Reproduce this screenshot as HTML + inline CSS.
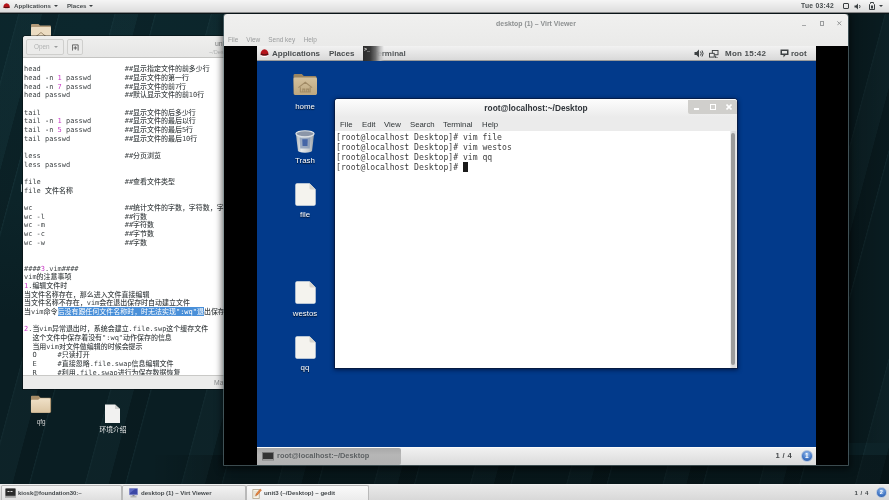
<!DOCTYPE html>
<html><head><meta charset="utf-8">
<style>
*{box-sizing:border-box;margin:0;padding:0}
html,body{width:889px;height:500px;overflow:hidden;background:#0c2126}
body{position:relative;will-change:transform;font-family:"Liberation Sans","Noto Sans CJK SC",sans-serif;font-size:6px;color:#2e3436}
.abs{position:absolute}
#bg{left:0;top:0;width:889px;height:500px;background:
 repeating-linear-gradient(105deg,rgba(255,255,255,0) 0,rgba(255,255,255,0) 21px,rgba(120,190,200,.075) 21.5px,rgba(120,190,200,.03) 23px,rgba(120,190,200,.03) 44px,rgba(0,0,0,.10) 44.5px,rgba(0,0,0,.10) 60px,rgba(120,190,200,.065) 60.5px,rgba(255,255,255,0) 62px,rgba(255,255,255,0) 93px),
 radial-gradient(ellipse 500px 300px at 10% 5%,#0c272d 0,#0c2429 60%,#0a1e23 100%)}
/* host top bar */
#topbar{left:0;top:0;width:889px;height:14px;background:linear-gradient(#f5f5f5 0,#dedede 11.5px,#9a9a9a 12.4px,#0a1114 13.2px,#0a1a1e 14px)}
#topbar .t{position:absolute;top:0;line-height:12.4px;font-weight:bold;font-size:6.15px;color:#464b4d;white-space:nowrap}
/* host bottom bar */
#botbar{left:0;top:484px;width:889px;height:16px;background:linear-gradient(#f4f4f4 0,#e9e9e9 1.500px,#d8d8d8 100%)}
.tb{position:absolute;top:.8px;height:15.200px;border:.8px solid #b9b9b9;border-bottom:none;border-radius:2px 2px 0 0;font-weight:bold;font-size:6.100px;line-height:16.200px;color:#42474a;white-space:nowrap;background:linear-gradient(#f3f3f3,#dfdfdf)}
.tb span{position:absolute;left:18px;top:-.8px}
/* gedit */
#gedit{left:23px;top:36px;width:230px;height:353px;background:#fff;border-radius:3px 3px 0 0;overflow:hidden;box-shadow:0 0 0 1px rgba(0,0,0,.35)}
#ghead{left:0;top:0;width:230px;height:22px;background:linear-gradient(#efefee,#e6e6e5);border-bottom:1px solid #c4c4c2}
#gtext{left:1px;top:29.2px;width:230px;font-family:"DejaVu Sans Mono","Liberation Mono","Noto Sans CJK SC",monospace;font-size:6.98px;line-height:8.677px;color:#3f4446;font-weight:500;white-space:pre;tab-size:8}
#gtext i{font-style:normal;color:#c839c5}
#gtext .cj{font-family:"Noto Sans CJK SC","Liberation Mono",monospace}
#gtext b{font-weight:normal;background:#4a90d9;color:#fff;padding:1.3px 0 .4px}
#gstat{left:0;top:339px;width:230px;height:14px;background:#ececeb;border-top:1px solid #c9c9c7;font-size:6.8px;color:#8a8d8e;line-height:13px}
/* virt viewer */
#vv{left:224px;top:14px;width:624px;height:451px;background:#000;border-radius:3px 3px 0 0;overflow:hidden;box-shadow:0 0 0 .8px rgba(120,145,150,.65),0 2px 7px 2px rgba(0,0,0,.6)}
#vvhead{left:0;top:0;width:624px;height:32px;background:linear-gradient(#f0f0ef,#eaeae9);}
#vvtitle{left:0;top:0;width:624px;text-align:center;line-height:19px;font-size:6.9px;font-weight:bold;color:#8d9091}
.vvm{top:19px;line-height:13px;font-size:6.45px;color:#9a9c9d}
/* guest */
#guest{left:33px;top:32px;width:559px;height:419px;background:#023a8b;overflow:hidden}
#gtop{left:0;top:0;width:559px;height:14.600px;background:linear-gradient(#f2f2f2,#d9d9d9);border-bottom:.8px solid #9a9a9a}
#gtop .t{position:absolute;top:0;line-height:15.600px;font-weight:bold;font-size:8px;color:#4a4e50;white-space:nowrap}
#gbot{left:0;top:400.600px;width:559px;height:18.400px;background:linear-gradient(#f1f1f1,#dadada);border-top:1px solid #fbfbfb}
.dl{position:absolute;width:60px;text-align:center;color:#fff;font-size:7.900px;line-height:9px;text-shadow:0 1px 1px rgba(0,0,0,.8)}
/* terminal */
#term{left:78px;top:53.200px;width:402px;height:268.700px;background:#fff;border-radius:3px 3px 0 0;overflow:hidden;box-shadow:0 0 0 .8px rgba(10,20,50,.75),0 1px 4px 1px rgba(0,5,30,.6)}
#thead{left:0;top:0;width:402px;height:18px;background:linear-gradient(#fdfdfd,#ebebeb)}
#ttitle{left:0;top:0;width:402px;text-align:center;line-height:18.600px;font-weight:bold;font-size:8.3px;color:#30353a}
#tmenu{left:0;top:18px;width:402px;height:14px;background:#ebebeb}
#tmenu span{position:absolute;top:0;line-height:16px;font-size:7.8px;color:#2e3436}
#ttext{left:1px;top:34px;font-family:"DejaVu Sans Mono","Liberation Mono",monospace;font-size:8.12px;line-height:9.92px;color:#404040;white-space:pre}
</style></head><body>
<div id="bg" class="abs"></div>
<div class="abs" style="left:0;top:455px;width:889px;height:30px;background:linear-gradient(90deg,rgba(0,0,0,0) 0,rgba(0,0,0,0) 150px,rgba(0,0,0,.28) 240px,rgba(0,0,0,.28) 100%)"></div>
<div class="abs" style="left:840px;top:13px;width:49px;height:430px;background:linear-gradient(90deg,rgba(0,0,0,.3),rgba(0,0,0,.05))"></div>

<!-- desktop icons -->
<svg class="abs" style="left:30px;top:23px" width="22" height="20" viewBox="0 0 22 20"><path d="M1 2q0-1 1-1h6.500l1.500 1.500h10q1 0 1 1V19H1z" fill="#b39a78"/><path d="M1 5q0-1 1-1h18q1 0 1 1V19H1z" fill="#ecdcc2"/><path d="M6 13.500l5-4 5 4" fill="none" stroke="#a08c6e" stroke-width="1"/></svg>
<svg class="abs" style="left:29.800px;top:394px" width="23" height="20" viewBox="0 0 24 20"><defs><linearGradient id="qg" x1="0" y1="0" x2="0" y2="1"><stop offset="0" stop-color="#f0e1c8"/><stop offset="1" stop-color="#dbc5a2"/></linearGradient></defs><path d="M1 2.500q0-1 1-1h7l2 2h10q1 0 1 1V18q0 1-1 1H2q-1 0-1-1z" fill="#a78d68"/><path d="M1 6.500q0-1 1-1h6.500l2-1.500h9.500q1 0 1 1V18q0 1-1 1H2q-1 0-1-1z" fill="url(#qg)"/></svg>
<div class="abs" style="left:21.200px;top:416.800px;width:40px;text-align:center;color:#d4d4d4;font-size:6.3px;line-height:9px">qfg</div>
<svg class="abs" style="left:104px;top:403.500px" width="17" height="19.500" viewBox="0 0 17 21" preserveAspectRatio="none"><path d="M1 0.5h10l5 5v15H1z" fill="#f1f1f0"/><path d="M11 0.5l5 5h-5z" fill="#cfcfcd"/></svg>
<div class="abs" style="left:93px;top:424.800px;width:40px;text-align:center;color:#f0f0f0;font-size:6.8px;line-height:10px;font-family:'Liberation Sans','Noto Sans CJK SC',sans-serif">环境介绍</div>

<!-- gedit -->
<div id="gedit" class="abs">
 <div id="ghead" class="abs">
  <div class="abs" style="left:3px;top:3.4px;width:38px;height:15.600px;border:1px solid #cfcfcd;border-radius:2px;background:#ebebea"></div>
  <div class="abs" style="left:11px;top:3px;line-height:16px;font-size:6.4px;color:#b0b2b2">Open</div>
  <div class="abs" style="left:31px;top:10px;width:0;height:0;border:2px solid transparent;border-top:2.5px solid #9a9c9c"></div>
  <div class="abs" style="left:44px;top:3.4px;width:16px;height:15.600px;border:1px solid #cfcfcd;border-radius:2px;background:#ebebea"></div>
  <svg class="abs" style="left:48.500px;top:7.500px" width="7" height="7" viewBox="0 0 8 8"><path d="M0.5 7.5V1h6.5v6.5" fill="none" stroke="#555" stroke-width="1"/><path d="M3.8 2.5v4M1.8 4.5h4" stroke="#555" stroke-width="1"/></svg>
  <div class="abs" style="left:192px;top:3.700px;font-size:6.900px;color:#7a7d7e;line-height:8px">unit3</div>
  <div class="abs" style="left:186px;top:12.500px;font-size:5.6px;color:#b5b7b7;line-height:7px">~/Desktop</div>
 </div>
<div id="gtext" class="abs">head			##显示指定文件的前多少行
head -n <i>1</i> passwd	##显示文件的第一行
head -n <i>7</i> passwd	##显示文件的前7行
head passwd		##默认显示文件的前10行

tail			##显示文件的后多少行
tail -n <i>1</i> passwd	##显示文件的最后以行
tail -n <i>5</i> passwd	##显示文件的最后5行
tail passwd		##显示文件的最后10行

less			##分页浏览
less passwd

file			##查看文件类型
file 文件名称

wc			##统计文件的字数，字符数，字节数
wc -l			##行数
wc -m			##字符数
wc -c			##字节数
wc -w			##字数


####<i>3</i>.vim####
vim的注意事项
<i>1</i>.编辑文件时
当文件名称存在，那么进入文件直接编辑
当文件名称不存在，vim会在退出保存时自动建立文件
当vim命令<b>后没有跟任何文件名称时，时无法实现":wq"退</b>出保存的

<i>2</i>.当vim异常退出时，系统会建立.file.swp这个缓存文件
  这个文件中保存着没有":wq"动作保存的信息
  当用vim对文件做编辑的时候会提示
  O	#只读打开
  E	#直接忽略.file.swap信息编辑文件
  R	#利用.file.swap进行为保存数据恢复</div>
 <div id="gstat" class="abs"><span class="abs" style="left:191px">Markdown</span></div>
</div>

<div class="abs" style="left:20.800px;top:184px;width:1.600px;height:7.500px;background:rgba(215,225,225,.75);border-radius:1px"></div>
<!-- virt viewer -->
<div id="vv" class="abs">
 <div id="vvhead" class="abs">
  <div id="vvtitle" class="abs">desktop (1) – Virt Viewer</div>
  <div class="abs vvm" style="left:4px">File</div>
  <div class="abs vvm" style="left:22.300px">View</div>
  <div class="abs vvm" style="left:44.300px">Send key</div>
  <div class="abs vvm" style="left:79.700px">Help</div>
  <div class="abs" style="left:578.200px;top:10.800px;width:3.500px;height:1px;background:#a5a7a8"></div>
  <div class="abs" style="left:595.800px;top:7.200px;width:4.400px;height:4.400px;border:1px solid #9b9d9e"></div>
  <svg class="abs" style="left:613.300px;top:7.300px" width="4.600" height="4.600" viewBox="0 0 6 6"><path d="M0.5 0.5l5 5M5.500 0.5l-5 5" stroke="#939596" stroke-width="1.300"/></svg>
 </div>
 <div id="guest" class="abs">
  <div id="gtop" class="abs">
   <svg class="abs" style="left:3px;top:3px" width="9" height="8" viewBox="0 0 9 8"><path d="M.5 5.800q0-5 4-5.500 4 .5 4 5.500-1.500 1.500-4 .6-2.500 .9-4-.6z" fill="#b5141b"/><path d="M1.200 4.300q3.300 1.700 6.600 0l.5 1.400q-3.800 1.700-7.600 0z" fill="#4a0d10" opacity=".85"/><path d="M.8 6.300q3.700 1.500 7.400 0l-.4 1q-3.300 1.300-6.600 0z" fill="#fff"/></svg>
   <div class="t" style="left:15px">Applications</div>
   <div class="t" style="left:72px">Places</div>
   <div class="t" style="left:116px;color:#55595b">Terminal</div>
   <div class="abs" style="left:105.500px;top:0;width:21px;height:15px;background:linear-gradient(90deg,#2c2c2c 0,#383838 35%,#6f6f6f 60%,rgba(190,190,190,.9) 82%,rgba(225,225,225,0) 100%)"></div>
   <div class="abs" style="left:107px;top:2px;font-size:5px;line-height:5px;color:#eee;font-weight:bold;font-family:'Liberation Mono',monospace">&gt;_</div>
   <svg class="abs" style="left:437px;top:3px" width="10" height="9" viewBox="0 0 10 9"><path d="M0.500 3h2l2.500-2.500v8L2.500 6h-2z" fill="#3d4143"/><path d="M6.500 2.500q1.500 2 0 4M8 1.500q2.200 3 0 6" fill="none" stroke="#3d4143" stroke-width="1"/></svg>
   <svg class="abs" style="left:452px;top:3.500px" width="9.500" height="8.500" viewBox="0 0 10 9"><rect x="3.500" y="0.500" width="6" height="4.500" fill="none" stroke="#3d4143"/><rect x="0.500" y="3.500" width="5" height="4" fill="#e8e8e8" stroke="#3d4143"/><path d="M7 6v2.500h2.500" stroke="#3d4143" fill="none"/></svg>
   <div class="t" style="left:468px;letter-spacing:.22px">Mon 15:42</div>
   <svg class="abs" style="left:523px;top:3px" width="9" height="9" viewBox="0 0 9 9"><path d="M0.500 0.500h8v5.500h-3l-2 2.500v-2.500h-3z" fill="#3d4143"/><rect x="2" y="2" width="5" height="2.500" fill="#e8e8e8"/></svg>
   <div class="t" style="left:534px">root</div>
  </div>

  <!-- desktop icons -->
  <svg class="abs" style="left:35.500px;top:27.400px" width="24.500" height="22.500" viewBox="0 0 25 23"><defs><linearGradient id="fg" x1="0" y1="0" x2="0" y2="1"><stop offset="0" stop-color="#d3c09c"/><stop offset="1" stop-color="#bda77f"/></linearGradient></defs><path d="M0.500 2.500q0-1.500 1.500-1.500h7l2 2h11.500q1.500 0 1.500 1.500V21q0 1.500-1.500 1.500h-20.500q-1.500 0-1.500-1.500z" fill="#9a8460"/><path d="M0.500 6q0-1.300 1.500-1.300h21q1.500 0 1.500 1.300V21q0 1.500-1.500 1.500h-20.500q-1.500 0-1.500-1.500z" fill="url(#fg)"/><path d="M5.500 15l7-5.500 7 5.500M7.500 14.500v5h10v-5M10 19.500v-3h2v3M14 19.500v-3h2v3" fill="none" stroke="#a18b66" stroke-width="1.100"/></svg>
  <div class="dl" style="left:18px;top:55.600px">home</div>
  <svg class="abs" style="left:38px;top:83.500px" width="20" height="23.500" viewBox="0 0 22 28" preserveAspectRatio="none"><defs><linearGradient id="tg" x1="0" y1="0" x2="1" y2="0"><stop offset="0" stop-color="#aeb4b9"/><stop offset=".3" stop-color="#e8ebed"/><stop offset=".7" stop-color="#c9ced2"/><stop offset="1" stop-color="#9aa1a7"/></linearGradient></defs><path d="M1 4.500l2.200 20q.3 2.500 7.800 2.500t7.800-2.500l2.200-20z" fill="url(#tg)"/><path d="M5 9h12l-.8 13h-10.400z" fill="#7f93b3" opacity=".75"/><path d="M8 11h6l-.3 8h-5.400z" fill="#2f55a0" opacity=".8"/><ellipse cx="11" cy="4.500" rx="10" ry="3.600" fill="#8b96a8" stroke="#dde1e4" stroke-width="1.400"/></svg>
  <div class="dl" style="left:18px;top:110px">Trash</div>
  <svg class="abs" style="left:37.800px;top:137.4px" width="21" height="23" viewBox="0 0 21 23"><path d="M.3 2q0-1.700 1.700-1.700h12.500l6.200 6.200v14.500q0 1.700-1.700 1.700H2q-1.700 0-1.700-1.700z" fill="#f4f3ee"/><path d="M14.500 .3l6.200 6.200h-4.700q-1.500 0-1.500-1.500z" fill="#d6d5cf"/></svg>
  <div class="dl" style="left:18px;top:164px">file</div>
  <svg class="abs" style="left:37.800px;top:235.4px" width="21" height="23" viewBox="0 0 21 23"><path d="M.3 2q0-1.700 1.700-1.700h12.500l6.200 6.200v14.500q0 1.700-1.700 1.700H2q-1.700 0-1.700-1.700z" fill="#f4f3ee"/><path d="M14.500 .3l6.200 6.200h-4.700q-1.500 0-1.500-1.500z" fill="#d6d5cf"/></svg>
  <div class="dl" style="left:18px;top:263px">westos</div>
  <svg class="abs" style="left:37.800px;top:290.4px" width="21" height="23" viewBox="0 0 21 23"><path d="M.3 2q0-1.700 1.700-1.700h12.500l6.200 6.200v14.500q0 1.700-1.700 1.700H2q-1.700 0-1.700-1.700z" fill="#f4f3ee"/><path d="M14.500 .3l6.200 6.200h-4.700q-1.500 0-1.500-1.500z" fill="#d6d5cf"/></svg>
  <div class="dl" style="left:18px;top:316.500px">qq</div>

  <!-- terminal -->
  <div id="term" class="abs">
   <div id="thead" class="abs">
    <div id="ttitle" class="abs">root@localhost:~/Desktop</div>
    <div class="abs" style="left:353px;top:.8px;width:48.500px;height:13.700px;background:#d0cfcc;border-radius:0 2px 0 2px"></div>
    <div class="abs" style="left:359px;top:9px;width:5px;height:1.500px;background:#fff"></div>
    <div class="abs" style="left:374.500px;top:4.500px;width:6px;height:6px;border:1.400px solid #fff"></div>
    <svg class="abs" style="left:390.500px;top:4.500px" width="6" height="6" viewBox="0 0 6 6"><path d="M0.500 0.500l5 5M5.500 0.500l-5 5" stroke="#fff" stroke-width="1.600"/></svg>
   </div>
   <div id="tmenu" class="abs"><span style="left:5px">File</span><span style="left:27px">Edit</span><span style="left:49px">View</span><span style="left:75px">Search</span><span style="left:108px">Terminal</span><span style="left:147px">Help</span></div>
<div id="ttext" class="abs">[root@localhost Desktop]# vim file
[root@localhost Desktop]# vim westos
[root@localhost Desktop]# vim qq
[root@localhost Desktop]# <span style="background:#1a1a1a"> </span></div>
   <div class="abs" style="left:394.500px;top:32px;width:7.500px;height:238px;background:linear-gradient(90deg,#f4f4f4,#dcdcdc 30%,#dcdcdc 70%,#ededed)"></div>
   <div class="abs" style="left:396px;top:34px;width:4px;height:232px;background:#9b9b9b;border-radius:2px"></div>
  </div>

  <div id="gbot" class="abs">
   <div class="abs" style="left:0;top:.5px;width:144px;height:17px;background:linear-gradient(#a8a8a8,#b6b6b6 40%,#b2b2b2);border-radius:0 2px 2px 0"></div>
   <div class="abs" style="left:4.500px;top:4.500px;width:12px;height:9px;background:#333;border:1px solid #777;border-bottom:2px solid #999;border-radius:1px"></div>
   <div class="abs" style="left:20px;top:0;line-height:16px;font-weight:bold;font-size:7.42px;color:#5d6163">root@localhost:~/Desktop</div>
   <div class="abs" style="left:518.500px;top:0;line-height:16px;font-weight:bold;font-size:7.600px;word-spacing:.7px;color:#474b4d">1 / 4</div>
   <div class="abs" style="left:543.500px;top:2px;width:12.500px;height:12.500px;border-radius:7px;background:radial-gradient(circle at 50% 30%,#9cc0ee,#3f74c4 60%,#2d5699);border:1px solid #b4c6df"></div>
   <div class="abs" style="left:543.500px;top:2px;width:12.500px;line-height:12.500px;text-align:center;font-size:6.500px;font-weight:bold;color:#fff">1</div>
  </div>
 </div>
</div>

<!-- host top bar -->
<div id="topbar" class="abs">
 <svg class="abs" style="left:2.500px;top:2.800px" width="7.200" height="6.400" viewBox="0 0 9 8"><path d="M.5 5.800q0-5 4-5.500 4 .5 4 5.500-1.500 1.500-4 .6-2.500 .9-4-.6z" fill="#b5141b"/><path d="M1.200 4.300q3.300 1.700 6.600 0l.5 1.400q-3.800 1.700-7.600 0z" fill="#4a0d10" opacity=".85"/><path d="M.8 6.300q3.700 1.500 7.400 0l-.4 1q-3.300 1.300-6.600 0z" fill="#fff"/></svg>
 <div class="t" style="left:14px">Applications</div>
 <div class="abs" style="left:54px;top:5px;width:0;height:0;border:2px solid transparent;border-top:2.500px solid #3a3f41"></div>
 <div class="t" style="left:67px">Places</div>
 <div class="abs" style="left:89px;top:5px;width:0;height:0;border:2px solid transparent;border-top:2.500px solid #3a3f41"></div>
 <div class="t" style="left:801px;font-size:6.7px;letter-spacing:.3px">Tue 03:42</div>
 <div class="abs" style="left:843px;top:3px;width:6px;height:6px;border:1px solid #3a3f41;border-radius:1px"></div>
 <svg class="abs" style="left:854px;top:3px" width="9" height="7" viewBox="0 0 9 7"><path d="M0.500 2.500h1.500l2-2v6l-2-2h-1.500z" fill="#3a3f41"/><path d="M5.500 2q1 1.500 0 3" fill="none" stroke="#3a3f41" stroke-width=".9"/></svg>
 <svg class="abs" style="left:869px;top:2px" width="6" height="8" viewBox="0 0 6 8"><path d="M0.500 7.500v-5l1-1V0.500h3v1l1 1v5z" fill="none" stroke="#3a3f41"/><rect x="2" y="3.500" width="2" height="3" fill="#3a3f41"/></svg>
 <div class="abs" style="left:879px;top:5px;width:0;height:0;border:2px solid transparent;border-top:2.500px solid #3a3f41"></div>
</div>

<!-- host bottom bar -->
<div id="botbar" class="abs">
 <div class="tb" style="left:.5px;width:121.500px"><svg class="abs" style="left:3.500px;top:2.500px" width="11" height="10" viewBox="0 0 11 10"><rect x=".5" y=".5" width="10" height="7.500" rx=".8" fill="#2a2a2a" stroke="#6a6a6a" stroke-width=".8"/><rect x="0" y="8.300" width="11" height="1.400" fill="#9a9a9a"/><path d="M2.500 3.500h2M5.500 3.500h2" stroke="#ddd" stroke-width="1"/></svg><span style="left:16.500px;font-size:5.950px">kiosk@foundation30:~</span></div>
 <div class="tb" style="left:122px;width:123.500px"><svg class="abs" style="left:6px;top:2.500px" width="9" height="10" viewBox="0 0 9 10"><rect x=".4" y=".4" width="8.200" height="6.400" rx=".6" fill="#3b47a6" stroke="#8088c8" stroke-width=".8"/><path d="M1 1l5 0-5 4z" fill="#6c78d0" opacity=".7"/><rect x="3.500" y="7" width="2" height="1.300" fill="#888"/><rect x="1.500" y="8.200" width="6" height="1.200" fill="#aaa"/></svg><span>desktop (1) – Virt Viewer</span></div>
 <div class="tb" style="left:245.500px;width:123px;background:linear-gradient(#fafafa,#ececec)"><svg class="abs" style="left:5px;top:2px" width="10" height="11" viewBox="0 0 10 11"><path d="M.8 1.500h6.500v9H.8z" fill="#f7f3e6" stroke="#b0a48c" stroke-width=".8"/><path d="M2 4h4M2 6h4M2 8h3" stroke="#c9c2b0" stroke-width=".6"/><path d="M3.500 7.800l.7-2 4-4.800 1.300 1.100-4 4.800z" fill="#e8833a" stroke="#a8521c" stroke-width=".4"/></svg><span style="left:17.500px">unit3 (~/Desktop) – gedit</span></div>
 <div class="abs" style="left:854.500px;top:.5px;line-height:16.200px;font-weight:bold;font-size:6.100px;word-spacing:1px;color:#42474a">1 / 4</div>
 <div class="abs" style="left:875.700px;top:3.200px;width:11px;height:10.600px;border-radius:6px;background:radial-gradient(circle at 50% 30%,#9cc0ee,#3f74c4 60%,#2d5699);border:1px solid #b4c6df"></div>
 <div class="abs" style="left:875.700px;top:3.200px;width:11px;line-height:10.600px;text-align:center;font-size:5.500px;font-weight:bold;color:#fff">2</div>
</div>
</body></html>
